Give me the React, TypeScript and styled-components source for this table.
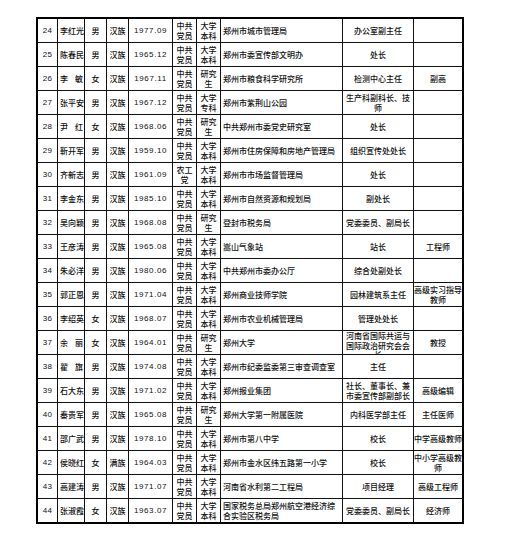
import React from "react";
import styled, { createGlobalStyle } from "styled-components";

const GlobalStyle = createGlobalStyle`
  html, body {
    margin: 0;
    padding: 0;
    background: #ffffff;
  }
  body {
    font-family: "Noto Sans CJK SC", "Noto Sans", sans-serif;
    color: #111;
  }
`;

const Page = styled.div`
  padding: 17px 0 0 36px;
  width: 528px;
  height: 556px;
  box-sizing: border-box;
`;

const Table = styled.div`
  display: grid;
  grid-template-columns: 19px 26px 21px 21px 43px 23px 23px 121px 70px 48px;
  grid-template-rows: repeat(21, 1fr);
  gap: 1px;
  width: 428px;
  height: 507px;
  box-sizing: border-box;
  border: 2px solid #000;
  background: #111;
`;

type Align = "center" | "left";

const Cell = styled.div<{ $align?: Align; $top?: boolean }>`
  background: #ffffff;
  display: flex;
  align-items: ${(p) => (p.$top ? "flex-start" : "center")};
  justify-content: ${(p) => (p.$align === "left" ? "flex-start" : "center")};
  text-align: ${(p) => (p.$align === "left" ? "left" : "center")};
  padding: ${(p) => (p.$align === "left" ? "0 0 0 2px" : "0")};
  overflow: hidden;
  font-size: 8px;
  font-weight: 500;
  line-height: 9.5px;
  white-space: pre;
  color: #111;
`;

const NumText = styled.span`
  font-family: "Liberation Sans", "Noto Sans", sans-serif;
  font-size: 8px;
  font-weight: 400;
  letter-spacing: 0.2px;
`;

const DateText = styled.span`
  font-family: "Liberation Sans", "Noto Sans", sans-serif;
  font-size: 8px;
  font-weight: 400;
  letter-spacing: 0.6px;
`;

const NameCell = styled(Cell)`
  justify-content: space-between;
  padding: 0 1px 0 2px;
`;

type Row = {
  no: number;
  name: string;
  gender: string;
  nation: string;
  birth: string;
  party: string;
  edu: string;
  org: string;
  post: string;
  title: string;
  postTop?: boolean;
};

const rows: Row[] = [
  { no: 24, name: "李红光", gender: "男", nation: "汉族", birth: "1977.09", party: "中共\n党员", edu: "大学\n本科", org: "郑州市城市管理局", post: "办公室副主任", title: "" },
  { no: 25, name: "陈春民", gender: "男", nation: "汉族", birth: "1965.12", party: "中共\n党员", edu: "大学\n本科", org: "郑州市委宣传部文明办", post: "处长", title: "" },
  { no: 26, name: "李敏", gender: "女", nation: "汉族", birth: "1967.11", party: "中共\n党员", edu: "研究\n生", org: "郑州市粮食科学研究所", post: "检测中心主任", title: "副高" },
  { no: 27, name: "张平安", gender: "男", nation: "汉族", birth: "1967.12", party: "中共\n党员", edu: "大学\n专科", org: "郑州市紫荆山公园", post: "生产科副科长、技\n师", title: "" },
  { no: 28, name: "尹红", gender: "女", nation: "汉族", birth: "1968.06", party: "中共\n党员", edu: "研究\n生", org: "中共郑州市委党史研究室", post: "处长", title: "" },
  { no: 29, name: "靳开军", gender: "男", nation: "汉族", birth: "1959.10", party: "中共\n党员", edu: "大学\n本科", org: "郑州市住房保障和房地产管理局", post: "组织宣传处处长", title: "" },
  { no: 30, name: "齐新志", gender: "男", nation: "汉族", birth: "1961.09", party: "农工\n党", edu: "大学\n本科", org: "郑州市市场监督管理局", post: "处长", title: "" },
  { no: 31, name: "李金东", gender: "男", nation: "汉族", birth: "1985.10", party: "中共\n党员", edu: "大学\n本科", org: "郑州市自然资源和规划局", post: "副处长", title: "" },
  { no: 32, name: "吴向颖", gender: "男", nation: "汉族", birth: "1968.08", party: "中共\n党员", edu: "研究\n生", org: "登封市税务局", post: "党委委员、副局长", title: "" },
  { no: 33, name: "王彦涛", gender: "男", nation: "汉族", birth: "1965.08", party: "中共\n党员", edu: "大学\n本科", org: "嵩山气象站", post: "站长", title: "工程师" },
  { no: 34, name: "朱必洋", gender: "男", nation: "汉族", birth: "1980.06", party: "中共\n党员", edu: "大学\n本科", org: "中共郑州市委办公厅", post: "综合处副处长", title: "" },
  { no: 35, name: "郭正恩", gender: "男", nation: "汉族", birth: "1971.04", party: "中共\n党员", edu: "大学\n本科", org: "郑州商业技师学院", post: "园林建筑系主任", title: "高级实习指导\n教师" },
  { no: 36, name: "李绍英", gender: "女", nation: "汉族", birth: "1968.07", party: "中共\n党员", edu: "大学\n本科", org: "郑州市农业机械管理局", post: "管理处处长", title: "" },
  { no: 37, name: "余丽", gender: "女", nation: "汉族", birth: "1964.01", party: "中共\n党员", edu: "研究\n生", org: "郑州大学", post: "河南省国际共运与\n国际政治研究会会\n长", title: "教授", postTop: true },
  { no: 38, name: "翟旗", gender: "男", nation: "汉族", birth: "1974.08", party: "中共\n党员", edu: "大学\n本科", org: "郑州市纪委监委第三审查调查室", post: "主任", title: "" },
  { no: 39, name: "石大东", gender: "男", nation: "汉族", birth: "1971.02", party: "中共\n党员", edu: "大学\n本科", org: "郑州报业集团", post: "社长、董事长、兼\n市委宣传部副部长", title: "高级编辑" },
  { no: 40, name: "秦贵军", gender: "男", nation: "汉族", birth: "1965.08", party: "中共\n党员", edu: "研究\n生", org: "郑州大学第一附属医院", post: "内科医学部主任", title: "主任医师" },
  { no: 41, name: "邵广武", gender: "男", nation: "汉族", birth: "1978.10", party: "中共\n党员", edu: "大学\n本科", org: "郑州市第八中学", post: "校长", title: "中学高级教师" },
  { no: 42, name: "侯晓红", gender: "女", nation: "满族", birth: "1964.03", party: "中共\n党员", edu: "大学\n本科", org: "郑州市金水区纬五路第一小学", post: "校长", title: "中小学高级教\n师" },
  { no: 43, name: "高建涛", gender: "男", nation: "汉族", birth: "1971.07", party: "中共\n党员", edu: "大学\n本科", org: "河南省水利第二工程局", post: "项目经理", title: "高级工程师" },
  { no: 44, name: "张淑霞", gender: "女", nation: "汉族", birth: "1963.07", party: "中共\n党员", edu: "大学\n本科", org: "国家税务总局郑州航空港经济综\n合实验区税务局", post: "党委委员、副局长", title: "经济师" },
];

export default function App() {
  return (
    <>
      <GlobalStyle />
      <Page>
        <Table>
          {rows.map((r) => (
            <React.Fragment key={r.no}>
              <Cell>
                <NumText>{r.no}</NumText>
              </Cell>
              <NameCell>
                {Array.from(r.name).map((ch, i) => (
                  <span key={i}>{ch}</span>
                ))}
              </NameCell>
              <Cell>{r.gender}</Cell>
              <Cell>{r.nation}</Cell>
              <Cell>
                <DateText>{r.birth}</DateText>
              </Cell>
              <Cell>{r.party}</Cell>
              <Cell>{r.edu}</Cell>
              <Cell $align="left">{r.org}</Cell>
              <Cell $top={r.postTop}>{r.post}</Cell>
              <Cell>{r.title}</Cell>
            </React.Fragment>
          ))}
        </Table>
      </Page>
    </>
  );
}
